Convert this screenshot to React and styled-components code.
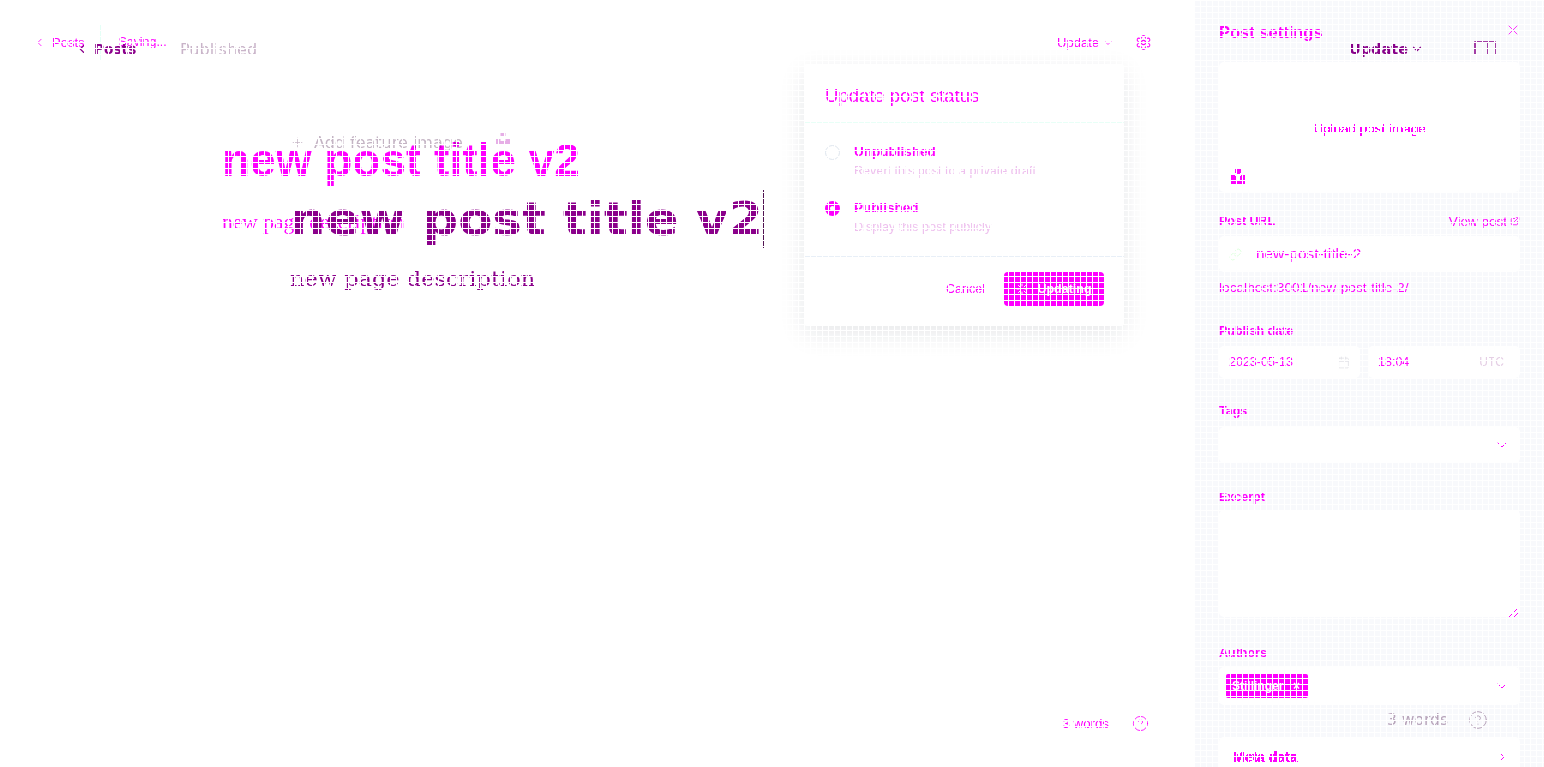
import React from 'react';
import styled, { createGlobalStyle, css } from 'styled-components';
import {
  ChevronLeft,
  ChevronDown,
  ChevronRight,
  Settings,
  CircleHelp,
  X,
  Plus,
  Link,
  Calendar,
  ExternalLink,
  Loader,
} from 'lucide-react';

const MAGENTA = '#ff00ff';
const PURPLE = '#8b008b';
const UI = '"Liberation Sans", Arial, sans-serif';
const WIDE = '"DejaVu Sans", sans-serif';

const GlobalStyle = createGlobalStyle`
  html, body { margin: 0; padding: 0; background: #fff; }
  body { font-family: ${UI}; color: ${MAGENTA}; }
`;

const hard = css`
  filter: url(#hard-edge);
`;

const Page = styled.div`
  position: relative;
  width: 1544px;
  height: 767px;
  overflow: hidden;
  background: #fff;
`;

const Base = styled.div`
  display: flex;
  height: 100%;
`;

const Main = styled.main`
  position: relative;
  flex: 1;
  display: flex;
  flex-direction: column;
`;

const TopBar = styled.div`
  display: flex;
  align-items: center;
  justify-content: space-between;
  height: 84px;
  padding: 0 43px 0 33px;
  font-size: 13px;
  ${hard}
`;

const Crumbs = styled.div`
  display: flex;
  align-items: center;
  gap: 6px;
`;

const Divider = styled.span`
  width: 1px;
  height: 36px;
  background: #e4ecf6;
  margin: 0 12px 0 9px;
`;

const Saving = styled.span`
  font-size: 12.4px;
`;

const Actions = styled.div`
  display: flex;
  align-items: center;
  gap: 21px;
  padding-top: 1px;
`;

const UpdateLink = styled.span`
  display: flex;
  align-items: center;
  gap: 3px;
`;

const Editor = styled.div`
  padding: 48px 0 0 222px;
`;

const Title = styled.h1`
  margin: 0;
  font-size: 46px;
  line-height: 56px;
  font-weight: 700;
  ${hard}
`;

const Description = styled.p`
  margin: 22px 0 0;
  font-family: "Liberation Serif", serif;
  font-size: 21.5px;
  line-height: 24px;
  ${hard}
`;

const WordCount = styled.div`
  margin-top: auto;
  display: flex;
  justify-content: flex-end;
  align-items: center;
  gap: 23px;
  height: 88px;
  padding: 0 46px 0 0;
  font-size: 13.3px;
  ${hard}
`;

const Popover = styled.section`
  position: absolute;
  left: 804px;
  top: 64px;
  width: 320px;
  height: 262px;
  background: #fff;
  box-shadow: 0 8px 26px rgba(20, 30, 50, 0.1);
  border-radius: 3px;
  display: flex;
  flex-direction: column;
`;

const PopoverHead = styled.div`
  height: 59px;
  box-sizing: border-box;
  display: flex;
  align-items: center;
  padding: 6px 21px 0;
  font-size: 18.5px;
  border-bottom: 1px solid #e8eff7;
  ${hard}
`;

const StatusList = styled.div`
  flex: 1;
  min-height: 0;
  padding: 21px 21px 0;
  border-bottom: 1px solid #e8eff7;
`;

const Status = styled.div`
  display: grid;
  grid-template-columns: 15px 1fr;
  column-gap: 14px;
  row-gap: 4px;
  align-items: center;
  margin-bottom: 22px;
`;

const Radio = styled.span`
  width: 15px;
  height: 15px;
  box-sizing: border-box;
  border-radius: 50%;
  background: #fff;
  border: ${p => (p.$on ? `5px solid ${MAGENTA}` : '1px solid #dfe6ee')};
`;

const StatusName = styled.span`
  font-size: 13.5px;
  line-height: 16px;
  font-weight: 700;
  ${hard}
`;

const StatusNote = styled.span`
  grid-column: 2;
  font-size: 12.6px;
  line-height: 14px;
  color: #eec0ee;
`;

const PopoverFoot = styled.div`
  height: 69px;
  box-sizing: border-box;
  flex-shrink: 0;
  display: flex;
  align-items: center;
  justify-content: flex-end;
  gap: 19px;
  padding: 0 20px 5px 0;
  font-size: 12.5px;
`;

const Cancel = styled.span`
  ${hard}
`;

const Primary = styled.span`
  display: flex;
  align-items: center;
  justify-content: center;
  gap: 9px;
  width: 100px;
  height: 34px;
  border-radius: 4px;
  background: ${MAGENTA};
  color: #fff;
  font-size: 12.5px;
  font-weight: 700;
`;

const Side = styled.aside`
  width: 349px;
  box-sizing: border-box;
  background: #f8f9fc;
  padding: 0 24px;
  display: flex;
  flex-direction: column;
  & > * {
    flex-shrink: 0;
  }
`;

const SideHead = styled.div`
  height: 62px;
  display: flex;
  justify-content: space-between;
  padding-top: 23px;
  box-sizing: border-box;
  font-size: 16.5px;
  font-weight: 700;
  ${hard}
`;

const CloseIcon = styled(X)`
  margin: -1px -1px 0 0;
`;

const ImageBox = styled.div`
  position: relative;
  height: 130px;
  box-sizing: border-box;
  padding-top: 3px;
  background: #fff;
  border-radius: 5px;
  display: flex;
  align-items: center;
  justify-content: center;
  font-size: 13.5px;
  ${hard}
`;

const UnsplashIcon = styled.svg`
  position: absolute;
  left: 12px;
  bottom: 8px;
`;

const Field = styled.div`
  margin-top: ${p => p.$top || 0}px;
`;

const LabelRow = styled.div`
  display: flex;
  justify-content: space-between;
  align-items: center;
  height: 16px;
  font-size: 12.5px;
  font-weight: 700;
  margin-bottom: ${p => p.$gap ?? 7}px;
  ${hard}
`;

const ViewPost = styled.span`
  display: flex;
  align-items: center;
  gap: 3px;
  font-weight: 400;
  font-size: 13.5px;
`;

const Input = styled.div`
  display: flex;
  align-items: center;
  justify-content: space-between;
  height: ${p => p.$h || 36}px;
  padding: 0 10px;
  background: #fff;
  border-radius: 5px;
  font-size: 12.5px;
  box-sizing: border-box;
`;

const InputText = styled.span`
  ${hard}
`;

const UrlText = styled.span`
  display: flex;
  align-items: center;
  gap: 14px;
  font-size: 15.4px;
  ${hard}
`;

const Hint = styled.div`
  font-size: 13.7px;
  margin-top: 8px;
  ${hard}
`;

const DateRow = styled.div`
  display: grid;
  grid-template-columns: 141px 152px;
  gap: 8px;
`;

const Muted = styled.span`
  color: #e5cfe5;
  font-size: 12px;
  margin-right: 6px;
`;

const TextArea = styled.div`
  position: relative;
  height: 107px;
  background: #fff;
  border-radius: 5px;
`;

const ResizeGrip = styled.svg`
  position: absolute;
  right: 2px;
  bottom: 0;
`;

const Token = styled.span`
  display: flex;
  align-items: center;
  justify-content: space-between;
  box-sizing: border-box;
  width: 82px;
  height: 24px;
  padding: 0 8px 0 6px;
  margin-left: -3px;
  border-radius: 2px;
  background: ${MAGENTA};
  color: #fff;
  font-size: 12px;
  font-weight: 700;
`;

const MetaBox = styled.div`
  margin-top: 32px;
  height: 60px;
  box-sizing: border-box;
  padding: 12px 10px 0 14px;
  background: #fff;
  border-radius: 5px;
  display: flex;
  justify-content: space-between;
  font-size: 14px;
  font-weight: 700;
  ${hard}
`;

/* the second picture laid over the first one */
const GhostLayer = styled.div`
  position: absolute;
  inset: 0;
  display: flex;
  flex-direction: column;
  mix-blend-mode: multiply;
  font-family: ${WIDE};
  color: ${PURPLE};
`;

const GhostBar = styled.div`
  display: flex;
  align-items: center;
  height: 98px;
  padding: 0 48px 0 75px;
`;

const GhostBack = styled.span`
  display: flex;
  align-items: center;
  gap: 5px;
  font-size: 13.7px;
  font-weight: 700;
  width: 105px;
`;

const GhostStatus = styled.span`
  color: #c9b4c9;
  font-size: 16px;
  flex: 1;
`;

const GhostUpdate = styled.span`
  display: flex;
  align-items: center;
  gap: 2px;
  font-weight: 700;
  font-size: 14.5px;
  margin-right: 50px;
`;

const GhostEditor = styled.div`
  padding: 34px 0 0 290px;
`;

const AddImage = styled.div`
  display: flex;
  align-items: center;
  gap: 9px;
  height: 20px;
  font-size: 16px;
  color: #c4b4c4;
`;

const GhostUnsplash = styled.svg`
  margin: -7px 0 0 24px;
`;

const GhostTitle = styled.div`
  display: flex;
  align-items: stretch;
  margin-top: 38px;
  font-size: 46px;
  line-height: 58px;
  font-weight: 700;
  transform: scaleX(1.082);
  transform-origin: left;
  ${hard}
`;

const Caret = styled.span`
  width: 1px;
  background: #444;
`;

const GhostDescription = styled.div`
  margin-top: 17px;
  font-family: "DejaVu Serif", serif;
  font-size: 20px;
  line-height: 28px;
  transform: scaleX(1.124);
  transform-origin: left;
  ${hard}
`;

const GhostWords = styled.div`
  margin-top: auto;
  height: 94px;
  display: flex;
  justify-content: flex-end;
  align-items: center;
  gap: 20px;
  padding-right: 56px;
  font-size: 15.5px;
  color: #bda8bd;
`;

const Grid = styled.div`
  position: absolute;
  inset: 0;
  pointer-events: none;
  background-image:
    linear-gradient(to right, #fff 1px, transparent 1px),
    linear-gradient(to bottom, #fff 1px, transparent 1px);
  background-size: 6px 6px;
`;

const HiddenDefs = styled.svg`
  position: absolute;
  width: 0;
  height: 0;
`;

const App = () => (
  <Page>
    <GlobalStyle />
    <HiddenDefs aria-hidden='true'>
      <filter id='hard-edge' colorInterpolationFilters='sRGB'>
        <feComponentTransfer>
          <feFuncG type='discrete' tableValues='0 0 0 0 1 1' />
        </feComponentTransfer>
      </filter>
    </HiddenDefs>

    <Base>
      <Main>
        <TopBar>
          <Crumbs>
            <ChevronLeft size={13} strokeWidth={1.5} />
            <span>Posts</span>
            <Divider />
            <Saving>Saving...</Saving>
          </Crumbs>
          <Actions>
            <UpdateLink>
              Update <ChevronDown size={12} strokeWidth={1.5} />
            </UpdateLink>
            <Settings size={17} strokeWidth={1.5} />
          </Actions>
        </TopBar>

        <Editor>
          <Title>new post title v2</Title>
          <Description>new page description</Description>
        </Editor>

        <WordCount>
          <span>3 words</span>
          <CircleHelp size={17} strokeWidth={1.2} />
        </WordCount>

        <Popover>
          <PopoverHead>Update post status</PopoverHead>
          <StatusList>
            <Status>
              <Radio />
              <StatusName>Unpublished</StatusName>
              <StatusNote>Revert this post to a private draft</StatusNote>
            </Status>
            <Status>
              <Radio $on />
              <StatusName>Published</StatusName>
              <StatusNote>Display this post publicly</StatusNote>
            </Status>
          </StatusList>
          <PopoverFoot>
            <Cancel>Cancel</Cancel>
            <Primary>
              <Loader size={12} strokeWidth={2} />
              Updating
            </Primary>
          </PopoverFoot>
        </Popover>
      </Main>

      <Side>
        <SideHead>
          <span>Post settings</span>
          <CloseIcon size={16} strokeWidth={1.2} />
        </SideHead>

        <ImageBox>
          Upload post image
          <UnsplashIcon width='14' height='15' viewBox='0 0 14 15' fill={MAGENTA}>
            <path d='M4.5 0h5v4.5h-5zM0 6.5h4.5V11h5V6.5H14V15H0z' />
          </UnsplashIcon>
        </ImageBox>

        <Field $top={21}>
          <LabelRow $gap={7}>
            <span>Post URL</span>
            <ViewPost>
              View post <ExternalLink size={10} strokeWidth={2} />
            </ViewPost>
          </LabelRow>
          <Input>
            <UrlText>
              <Link size={13} strokeWidth={1.5} color='#d8c8d8' />
              new-post-title-2
            </UrlText>
          </Input>
          <Hint>localhost:3001/new-post-title-2/</Hint>
        </Field>

        <Field $top={28}>
          <LabelRow $gap={7}>Publish date</LabelRow>
          <DateRow>
            <Input $h={32}>
              <InputText>2023-05-13</InputText>
              <Calendar size={13} strokeWidth={1.5} color='#e2e2e6' />
            </Input>
            <Input $h={32}>
              <InputText>18:04</InputText>
              <Muted>UTC</Muted>
            </Input>
          </DateRow>
        </Field>

        <Field $top={25}>
          <LabelRow $gap={8}>Tags</LabelRow>
          <Input>
            <span />
            <ChevronDown size={16} strokeWidth={1.5} />
          </Input>
        </Field>

        <Field $top={26}>
          <LabelRow $gap={5}>Excerpt</LabelRow>
          <TextArea>
            <ResizeGrip width='9' height='8' viewBox='0 0 9 8' stroke={MAGENTA} fill='none'>
              <path d='M0 8 8 0M5 8 9 4' />
            </ResizeGrip>
          </TextArea>
        </Field>

        <Field $top={28}>
          <LabelRow $gap={6}>Authors</LabelRow>
          <Input $h={38}>
            <Token>
              Stillinger <span>×</span>
            </Token>
            <ChevronDown size={16} strokeWidth={1.5} />
          </Input>
        </Field>

        <MetaBox>
          Meta data
          <ChevronRight size={16} strokeWidth={1.5} />
        </MetaBox>
      </Side>
    </Base>

    <GhostLayer>
      <GhostBar>
        <GhostBack>
          <ChevronLeft size={14} strokeWidth={2} />
          Posts
        </GhostBack>
        <GhostStatus>Published</GhostStatus>
        <GhostUpdate>
          Update <ChevronDown size={14} strokeWidth={2} />
        </GhostUpdate>
        <svg width='22' height='16' viewBox='0 0 22 16' fill='none' stroke={PURPLE} strokeWidth='1.5'>
          <path d='M1 14V1h20v13M14 1v13' />
        </svg>
      </GhostBar>
      <GhostEditor>
        <AddImage>
          <Plus size={15} strokeWidth={1.2} />
          Add feature image
          <GhostUnsplash width='14' height='13' viewBox='0 0 14 13' fill='#e6aee6'>
            <path d='M4.5 0h5v4h-5zM0 6h4.5v3h5V6H14v7H0z' />
          </GhostUnsplash>
        </AddImage>
        <GhostTitle>
          new post title v2
          <Caret />
        </GhostTitle>
        <GhostDescription>new page description</GhostDescription>
      </GhostEditor>
      <GhostWords>
        <span>3 words</span>
        <CircleHelp size={20} strokeWidth={1.2} />
      </GhostWords>
    </GhostLayer>

    <Grid />
  </Page>
);

export default App;
